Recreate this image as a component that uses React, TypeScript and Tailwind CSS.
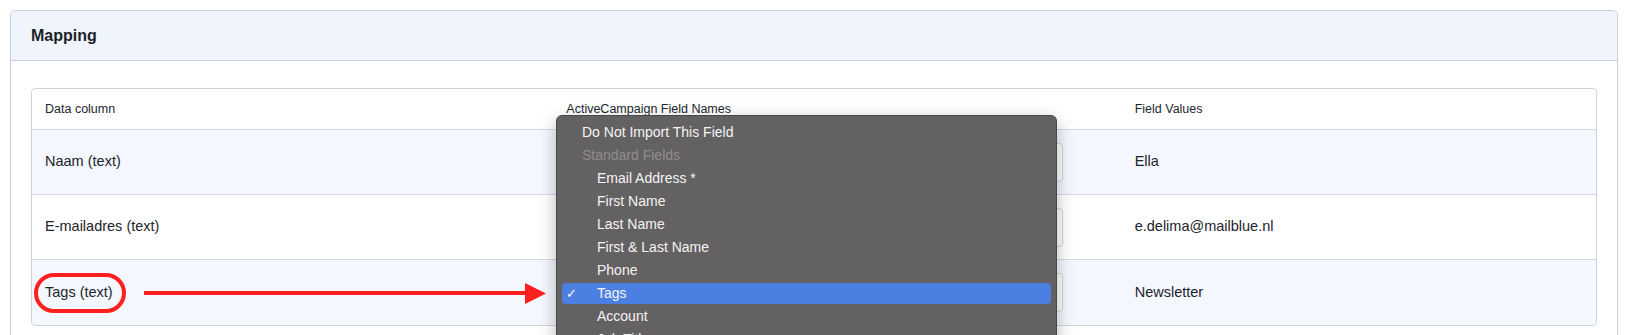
import React from "react";

const ROWS = [
  { column: "Naam (text)", value: "Ella", shaded: true },
  { column: "E-mailadres (text)", value: "e.delima@mailblue.nl", shaded: false },
  { column: "Tags (text)", value: "Newsletter", shaded: true },
];

const OPTIONS = [
  { label: "Do Not Import This Field", kind: "top" },
  { label: "Standard Fields", kind: "group" },
  { label: "Email Address *", kind: "item" },
  { label: "First Name", kind: "item" },
  { label: "Last Name", kind: "item" },
  { label: "First & Last Name", kind: "item" },
  { label: "Phone", kind: "item" },
  { label: "Tags", kind: "selected" },
  { label: "Account", kind: "item" },
  { label: "Job Title", kind: "item" },
] as const;

function FieldMenu() {
  return (
    <div className="absolute left-[556px] top-[115px] w-[501px] h-[260px] overflow-hidden rounded-[6px] border border-[#4a4748] bg-[#646162] pt-[5px] shadow-[0_6px_18px_rgba(0,0,0,0.28)] font-['Liberation_Sans',sans-serif] text-[14px]">
      {OPTIONS.map(({ label, kind }) => (
        <div key={label} className="h-[23px] px-[5px] flex items-center">
          <div
            className={`relative h-[21px] w-full rounded-[4px] flex items-center ${
              kind === "selected" ? "bg-[#4c7fe2]" : ""
            } ${kind === "top" || kind === "group" ? "pl-[20px]" : "pl-[35px]"} ${
              kind === "group" ? "text-[#8f8c8d]" : "text-[#f4f4f4]"
            }`}
          >
            {kind === "selected" && (
              <span className="absolute left-[4px] top-[1px] text-[13px] text-white">✓</span>
            )}
            {label}
          </div>
        </div>
      ))}
    </div>
  );
}

function Annotation() {
  return (
    <>
      <div className="absolute left-[34px] top-[273px] w-[92px] h-[40px] rounded-full border-[4px] border-[#ff1f1f]" />
      <div className="absolute left-[144px] top-[291px] w-[384px] h-[4px] bg-[#ff1f1f]" />
      <svg className="absolute left-[525px] top-[283px]" width="22" height="21" viewBox="0 0 22 21">
        <polygon points="0,0 21,10.5 0,21" fill="#ff1f1f" />
      </svg>
    </>
  );
}

export default function App() {
  return (
    <div className="relative min-h-[335px] bg-white pt-[10px] pl-[10px] pr-[15px] font-['Liberation_Sans',Arial,sans-serif] text-[#1e232c]">
      <section className="rounded-[5px] border border-[#c9d0dd] bg-white">
        <header className="h-[50px] flex items-center px-[20px] bg-[#f0f5fd] border-b border-[#c9d0dd] rounded-t-[5px]">
          <h2 className="text-[16px] font-bold text-[#1b1f27]">Mapping</h2>
        </header>

        <div className="px-[20px] pt-[27px] pb-[20px]">
          <div className="rounded-[4px] border border-[#cdd3de] overflow-hidden">
            <div className="grid grid-cols-3 h-[41px] items-center border-b border-[#d3d8e2] text-[12.5px] font-medium text-[#22272f]">
              <div className="px-[13px]">Data column</div>
              <div className="px-[13px]">ActiveCampaign Field Names</div>
              <div className="pl-[60px] pr-[13px]">Field Values</div>
            </div>

            {ROWS.map((row, i) => (
              <div
                key={row.column}
                className={`grid grid-cols-3 h-[65px] items-center text-[14.5px] ${
                  i < ROWS.length - 1 ? "border-b border-[#d3d8e2]" : ""
                } ${row.shaded ? "bg-[#f4f7fe]" : "bg-white"}`}
              >
                <div className="px-[13px]">{row.column}</div>
                <div className="pl-[13px] pr-[12px]">
                  <div className="h-[39px] rounded-[4px] border border-[#cfd5df] bg-white" />
                </div>
                <div className="pl-[60px] pr-[13px]">{row.value}</div>
              </div>
            ))}
          </div>
        </div>
      </section>

      <FieldMenu />
      <Annotation />
    </div>
  );
}
